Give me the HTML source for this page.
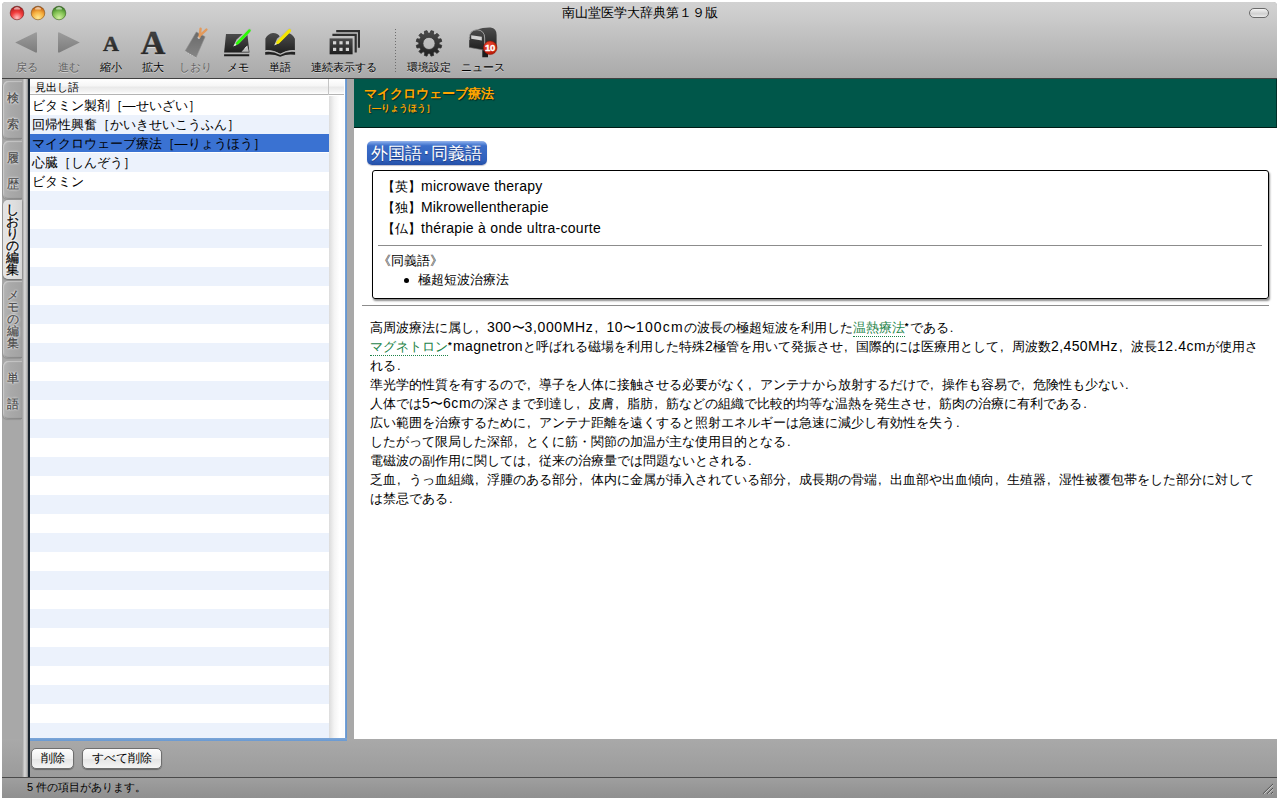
<!DOCTYPE html>
<html lang="ja">
<head>
<meta charset="utf-8">
<title>南山堂医学大辞典第１９版</title>
<style>
*{box-sizing:border-box;margin:0;padding:0}
html,body{width:1280px;height:800px;overflow:hidden;background:#fff}
body{font-family:"Liberation Sans",sans-serif;font-size:13px;color:#000;position:relative}
.abs{position:absolute}
#win{position:absolute;left:2px;top:2px;width:1275px;height:796px;background:#a8a8a8;overflow:hidden;border-radius:4px 4px 0 0}
/* title + toolbar */
#tb{position:absolute;left:0;top:0;width:1275px;height:76px;background:linear-gradient(#d2d2d2 0,#cdcdcd 12px,#bdbdbd 40px,#a9a9a9 76px)}
#tbline{position:absolute;left:0;top:76px;width:1275px;height:1px;background:#404040}
#title{position:absolute;left:0;top:3px;width:1275px;text-align:center;font-size:13px;line-height:16px;color:#000}
.light{position:absolute;top:4px;width:14px;height:14px;border-radius:50%}
#pill{position:absolute;left:1247px;top:6px;width:20px;height:10px;border-radius:5px;border:1px solid #6a6a6a;background:linear-gradient(#f4f4f4,#d0d0d0 60%,#ececec)}
.lbl{position:absolute;top:58px;font-size:11px;line-height:14px;white-space:nowrap;color:#000;text-align:center;text-shadow:0 1px 0 rgba(255,255,255,.45)}
.lbl.dis{color:#606060}
/* sidebar */
#side{position:absolute;left:0;top:77px;width:28px;height:698px;background:transparent;z-index:3}
.vtab{position:absolute;left:1px;width:19px;border-radius:5px 0 0 5px;background:linear-gradient(90deg,#b4b4b4,#a9a9a9 40%,#a2a2a2);box-shadow:inset 1px 1px 1px rgba(255,255,255,.35),inset 0 -1px 1px rgba(0,0,0,.18),-1px 1px 1px rgba(0,0,0,.12);font-size:12px;color:#484848;-webkit-text-stroke:.2px #484848;text-align:center;text-shadow:0 0 2px #ededed,0 0 2px #ededed,0 0 3px #ededed}
.vtab span{position:absolute;left:0;width:19px;line-height:13px;text-align:center}
.vtab.sel{background:linear-gradient(90deg,#e4e4e4,#dedede 60%,#d6d6d6);color:#000;font-size:13px;-webkit-text-stroke:.25px #000;text-shadow:0 0 2px #fff,0 0 2px #fff,0 0 3px #fff;box-shadow:0 1px 2px rgba(0,0,0,.4)}
#sidegrad{position:absolute;left:20px;top:0;width:6px;height:698px;background:linear-gradient(90deg,#9c9c9c,#d6d6d6 45%,#c4c4c4 70%,#8a8a8a)}
/* list */
#list{position:absolute;left:28px;top:77px;width:316px;height:659px;background:#fff;overflow:hidden}
#dline{position:absolute;left:26px;top:77px;width:2px;height:698px;background:#18222c;z-index:3}
#lhead{position:absolute;left:0;top:0;width:314px;height:16px;background:linear-gradient(#fff,#f6f6f6 45%,#e9e9e9 55%,#f4f4f4 85%,#fff);border-bottom:1px solid #b4b4b4;font-size:11px;line-height:16px;padding-left:5px}
.row{position:absolute;left:0;width:299px;height:19px;font-size:13px;line-height:19px;padding-left:1.5px;white-space:nowrap;overflow:hidden}
.alt{background:#ecf2fc}
.selrow{background:#3a72d2}
#sbar{position:absolute;left:299px;top:17px;width:15px;height:645px;background:linear-gradient(90deg,#dcdcdc,#f4f4f4 35%,#fff 70%,#fbfbfb)}
#focusr{position:absolute;left:342.5px;top:77px;width:2.5px;height:662px;z-index:2;background:linear-gradient(90deg,#7ba5d8,#5f92cf)}
#focusb{position:absolute;left:28px;top:736px;width:317px;height:3px;z-index:2;background:linear-gradient(#7ba5d8,#6a9ad2)}
/* content */
#content{position:absolute;left:352px;top:77px;width:923px;height:660px;background:#fff;overflow:hidden}
#ghead{position:absolute;left:0;top:0;width:923px;height:49px;background:#00574a;border-bottom:1px solid #001c16;border-right:1px solid #00302a}
#gt1{position:absolute;left:10px;top:7px;font-size:13px;line-height:16px;font-weight:bold;color:#ffa500;text-shadow:1px 1px 1px rgba(0,0,0,.55);white-space:nowrap}
#gt2{position:absolute;left:9px;top:24px;font-size:9px;line-height:10px;font-weight:bold;color:#ffa500;text-shadow:1px 1px 1px rgba(0,0,0,.5);white-space:nowrap}
#badge{position:absolute;left:13px;top:62px;width:120px;height:24px;border-radius:5px;background:linear-gradient(#9ab6ea 0,#6c96e0 8%,#3c6ec9 20%,#2f60bd 80%,#244fa6);color:#fff;font-size:17px;line-height:24px;white-space:nowrap;padding-left:4px;padding-top:1px;text-shadow:0 1px 1px rgba(0,0,40,.4);box-shadow:0 1px 1px rgba(0,0,60,.25)}
#box{position:absolute;left:18px;top:91px;width:897px;height:129px;border:1px solid #000;border-radius:3px;box-shadow:1px 2px 2px rgba(0,0,0,.45)}
.fl{position:absolute;left:9px;white-space:nowrap;font-size:13px;line-height:21px}
#hr1{position:absolute;left:5px;top:74px;width:884px;height:1px;background:#8c8c8c}
#hr2{position:absolute;left:8px;top:226px;width:907px;height:1px;background:#8c8c8c}
#body{position:absolute;left:16px;top:239px;font-size:13px;line-height:19px;white-space:nowrap;color:#000}
a.lk{color:#1e8449;text-decoration:none;display:inline-block;line-height:17px;border-bottom:1px dotted #1e8449;vertical-align:top;margin-top:1px}
.fc{display:inline-block;width:13px;text-align:left;padding-left:1px;font-size:13px}
.la{font-size:14px}
.ast{display:inline-block;width:5px;font-size:9.5px;font-weight:bold;vertical-align:3px;line-height:0;letter-spacing:0}
/* bottom */
#bbar{position:absolute;left:0;top:737px;width:1275px;height:38px;background:linear-gradient(#a9a9a9,#9b9b9b)}
#bline{position:absolute;left:0;top:775px;width:1275px;height:1px;background:#4a4a4a}
#status{position:absolute;left:0;top:776px;width:1275px;height:20px;background:linear-gradient(#9f9f9f,#8f8f8f);font-size:11px;line-height:19px;padding-left:25px;color:#000}
.btn{position:absolute;top:746px;height:21px;border-radius:5px;background:linear-gradient(#fdfdfd,#efefef 50%,#e4e4e4 51%,#f4f4f4);border:1px solid #6e6e6e;font-size:12px;line-height:19px;text-align:center;box-shadow:0 1px 1px rgba(0,0,0,.35)}
</style>
</head>
<body>
<div id="win">
  <div id="tb"></div>
  <div id="tbline"></div>
  <div id="title">南山堂医学大辞典第１９版</div>
  <div id="pill"></div>
  <svg class="abs" style="left:0;top:0" width="560" height="77" viewBox="2 2 560 77">
<defs>
<linearGradient id="gA" x1="0" y1="0" x2="0" y2="1"><stop offset="0" stop-color="#9c9c9c"/><stop offset="1" stop-color="#7c7c7c"/></linearGradient>
<linearGradient id="gD" x1="0" y1="0" x2="0" y2="1"><stop offset="0" stop-color="#4c4c4c"/><stop offset="1" stop-color="#1e1e1e"/></linearGradient>
<linearGradient id="gT" x1="0" y1="0" x2="0" y2="1"><stop offset="0" stop-color="#6a6a6a"/><stop offset="1" stop-color="#858585"/></linearGradient>
<radialGradient id="gR" cx=".4" cy=".3" r=".8"><stop offset="0" stop-color="#f04a30"/><stop offset="1" stop-color="#b01200"/></radialGradient>
<radialGradient id="rl" cx=".5" cy=".85" r=".85"><stop offset="0" stop-color="#ffc4c4"/><stop offset=".5" stop-color="#f23c3c"/><stop offset=".82" stop-color="#c22626"/><stop offset="1" stop-color="#7a1414"/></radialGradient>
<radialGradient id="yl" cx=".5" cy=".85" r=".85"><stop offset="0" stop-color="#ffe890"/><stop offset=".5" stop-color="#f6b040"/><stop offset=".82" stop-color="#d2741c"/><stop offset="1" stop-color="#8c3c0c"/></radialGradient>
<radialGradient id="gl" cx=".5" cy=".85" r=".85"><stop offset="0" stop-color="#d2f0a0"/><stop offset=".5" stop-color="#86c456"/><stop offset=".82" stop-color="#4c9030"/><stop offset="1" stop-color="#2a5a18"/></radialGradient>
<linearGradient id="hl" x1="0" y1="0" x2="0" y2="1"><stop offset="0" stop-color="#fff" stop-opacity=".9"/><stop offset="1" stop-color="#fff" stop-opacity="0"/></linearGradient>
</defs>
<!-- traffic lights -->
<g>
<circle cx="17" cy="13" r="6.8" fill="url(#rl)" stroke="#6e1414" stroke-opacity=".8" stroke-width=".7"/><ellipse cx="17" cy="8.9" rx="3" ry="1.7" fill="url(#hl)"/>
<circle cx="38" cy="13" r="6.8" fill="url(#yl)" stroke="#7e4a0c" stroke-opacity=".8" stroke-width=".7"/><ellipse cx="38" cy="8.9" rx="3" ry="1.7" fill="url(#hl)"/>
<circle cx="59" cy="13" r="6.8" fill="url(#gl)" stroke="#2e5a18" stroke-opacity=".8" stroke-width=".7"/><ellipse cx="59" cy="8.9" rx="3" ry="1.7" fill="url(#hl)"/>
</g>
<!-- back / forward -->
<path d="M15.2,42.4 L35.6,32.4 Q37,31.9 37,33.4 L37,51.6 Q37,53.1 35.6,52.6 Z" fill="url(#gA)"/>
<path d="M79.8,42.4 L59.4,32.4 Q58,31.9 58,33.4 L58,51.6 Q58,53.1 59.4,52.6 Z" fill="url(#gA)"/>
<!-- A small / large -->
<text x="111" y="51.6" font-family="Liberation Serif" font-weight="bold" font-size="22" text-anchor="middle" fill="#fff" fill-opacity=".45">A</text>
<text x="111" y="50.6" font-family="Liberation Serif" font-weight="bold" font-size="22" text-anchor="middle" fill="url(#gD)" stroke="#2a2a2a" stroke-width=".5">A</text>
<text x="153" y="55.2" font-family="Liberation Serif" font-weight="bold" font-size="34" text-anchor="middle" fill="#fff" fill-opacity=".45" stroke="#fff" stroke-opacity=".4" stroke-width=".5">A</text>
<text x="153" y="54.2" font-family="Liberation Serif" font-weight="bold" font-size="34" text-anchor="middle" fill="url(#gD)" stroke="#2a2a2a" stroke-width=".5">A</text>
<!-- bookmark tag -->
<g>
<path d="M196.3,32 L205.1,36.7 L196,57.6 L185.1,51.1 Z" fill="url(#gT)" stroke="#8e8e8e" stroke-width=".6" stroke-linejoin="round"/>
<path d="M185.4,51.6 L195.8,57.6" stroke="#c8c8c8" stroke-width="1" stroke-dasharray="1.6 1"/>
<circle cx="198.9" cy="37.6" r="1.3" fill="#d0d0d0"/>
<path d="M199.6,36.6 L200.6,28.6 M200.2,35.4 L206.4,29.6" stroke="#e39a5c" stroke-width="2.4" stroke-linecap="round" fill="none"/>
</g>
<!-- memo -->
<g>
<path d="M226,34 L247.4,34 L249.4,52.6 L224.1,52.6 Z" fill="url(#gD)"/>
<path d="M224.1,54.2 L249.2,54.2 L249.2,56.2 L224.1,56.2 Z" fill="#1c1c1c"/>
<path d="M241.5,51.8 L247.4,45.6 L248.9,51.8 Z" fill="#bdbdbd"/>
<path d="M244.6,48.6 L247.2,46.4" stroke="#eee" stroke-width="1"/>
<path d="M233.2,46.6 L236.6,39.4 L248.6,28.4 Q250.4,27.6 251.2,29.2 Q251.8,30.6 250.6,31.8 L239.2,43.2 Z" fill="#bcbcbc"/>
<path d="M236.4,42.2 L248.6,29.6 Q249.8,28.8 250.6,29.8 Q251.2,30.8 250.2,31.8 L238.4,44.2 L234.6,45.6 Z" fill="#2bfa06"/>
<path d="M233.6,46.2 L235.2,43.6 L236.6,45 Z" fill="#e8e8e8"/>
</g>
<!-- book -->
<g>
<path d="M265.4,38.6 Q268,33.6 273,33 Q278,33 280.2,37.2 Q282.4,33 287.6,33.1 Q292.4,33.8 294.9,38.8 L294.9,50.8 Q287.6,49.8 280.2,54.1 Q272.8,49.8 265.4,50.8 Z" fill="url(#gD)"/>
<path d="M265.4,50 Q273,49.2 280.2,53.8 Q287.4,49.2 294.9,50 L294.9,53 Q287.4,52 280.2,55.6 Q273,52 265.4,53 Z" fill="#b4b4b4"/><path d="M265.2,51.9 Q273,50.8 280.2,55 Q287.4,50.8 295.1,51.9 L295.1,54.8 Q287.4,53.4 280.2,56.8 Q273,53.4 265.2,54.8 Z" fill="#222"/>
<path d="M274.2,45.4 L277,38.8 L288.6,28.6 Q290.2,27.8 291,29.2 Q291.6,30.4 290.6,31.6 L279.4,42.6 Z" fill="#b8b8b8"/>
<path d="M276.6,41.4 L288.4,29.4 Q289.8,28.4 290.9,29.7 Q291.6,31 290.5,32 L278.8,43.7 L275.4,44.6 Z" fill="#f4e600"/>
<path d="M274.4,45.2 L275.8,42.8 L277,44 Z" fill="#e0e0e0"/>
</g>
<!-- stacked windows -->
<g fill="#2e2e2e">
<path d="M336.2,30 H360 V47.8 H357.9 V32.2 H336.2 Z"/>
<path d="M332.4,33.8 H356.8 V52.5 H354.6 V36 H332.4 Z"/>
<rect x="329.6" y="38.4" width="23" height="15.9" fill="url(#gD)"/>
<g fill="#d4d4d4"><rect x="333" y="41.2" width="3.2" height="3.2"/><rect x="339.4" y="41.2" width="3.2" height="3.2"/><rect x="345.8" y="41.2" width="3.2" height="3.2"/><rect x="333" y="47.8" width="3.2" height="3.2"/><rect x="339.4" y="47.8" width="3.2" height="3.2"/><rect x="345.8" y="47.8" width="3.2" height="3.2"/></g>
</g>
<!-- separator -->
<path d="M395.5,29 V72" stroke="#6e6e6e" stroke-width="1" stroke-dasharray="1 2"/>
<!-- gear -->
<path d="M429.98,33.25 L430.97,30.65 L433.66,31.37 L433.23,34.12 L434.92,35.10 L437.08,33.35 L439.05,35.32 L437.30,37.48 L438.28,39.17 L441.03,38.74 L441.75,41.43 L439.15,42.42 L439.15,44.38 L441.75,45.37 L441.03,48.06 L438.28,47.63 L437.30,49.32 L439.05,51.48 L437.08,53.45 L434.92,51.70 L433.23,52.68 L433.66,55.43 L430.97,56.15 L429.98,53.55 L428.02,53.55 L427.03,56.15 L424.34,55.43 L424.77,52.68 L423.08,51.70 L420.92,53.45 L418.95,51.48 L420.70,49.32 L419.72,47.63 L416.97,48.06 L416.25,45.37 L418.85,44.38 L418.85,42.42 L416.25,41.43 L416.97,38.74 L419.72,39.17 L420.70,37.48 L418.95,35.32 L420.92,33.35 L423.08,35.10 L424.77,34.12 L424.34,31.37 L427.03,30.65 L428.02,33.25Z M435.10,43.40 A6.1,6.1 0 1,0 422.90,43.40 A6.1,6.1 0 1,0 435.10,43.40Z" fill="url(#gD)" fill-rule="evenodd" stroke="#333" stroke-width=".8" stroke-linejoin="round"/>
<!-- mailbox -->
<g>
<path d="M482.3,48 H488 V57.2 H482.3 Z" fill="#1c1c1c"/>
<path d="M477,29.4 Q483,27.4 490.6,27.6 Q496.6,28.4 496.6,35 L496.6,47 L484.8,50.4 L484.8,38 Q484.6,30.4 477,29.4 Z" fill="url(#gD)"/>
<path d="M469.2,47.4 L469.2,37.6 Q469.6,30.2 477,29.6 Q484.6,30.2 484.8,38 L484.8,50.2 Z" fill="url(#gD)"/><path d="M469.3,40 L469.3,37.6 Q469.7,30.3 477,29.7 Q484.5,30.3 484.7,38 L484.7,50" fill="none" stroke="#a4a4a4" stroke-width=".9"/><path d="M469.2,47.4 L484.8,50.2" stroke="#777" stroke-width=".6"/>
<path d="M471.2,35.2 L481.8,36.8 L481.8,40.4 L471.2,38.8 Z" fill="#d2d2d2"/>
<circle cx="490.2" cy="47.8" r="6.8" fill="url(#gR)" stroke="#8a1000" stroke-width=".5"/>
<text x="490" y="51.2" font-family="Liberation Sans" font-weight="bold" font-size="9.5" text-anchor="middle" fill="#fff" stroke="#fff" stroke-width=".35" letter-spacing="-.4">10</text>
</g>
</svg>
  <div class="lbl dis" style="left:8.5px;width:32px">戻る</div><div class="lbl dis" style="left:51.0px;width:32px">進む</div><div class="lbl " style="left:93.0px;width:32px">縮小</div><div class="lbl " style="left:135.0px;width:32px">拡大</div><div class="lbl dis" style="left:172.0px;width:43px">しおり</div><div class="lbl " style="left:220.0px;width:32px">メモ</div><div class="lbl " style="left:262.0px;width:32px">単語</div><div class="lbl " style="left:303.7px;width:76px">連続表示する</div><div class="lbl " style="left:399.7px;width:54px">環境設定</div><div class="lbl " style="left:454.2px;width:54px">ニュース</div>
  <div id="side"><div id="sidegrad"></div>
    <div class="vtab" style="top:2px;height:58px"><span style="top:10.5px">検</span><span style="top:36.5px">索</span></div>
    <div class="vtab" style="top:62px;height:58px"><span style="top:10.5px">履</span><span style="top:36.5px">歴</span></div>
    <div class="vtab sel" style="top:121px;height:79px"><span style="top:3px">し</span><span style="top:15px">お</span><span style="top:27px">り</span><span style="top:39px">の</span><span style="top:51px">編</span><span style="top:63px">集</span></div>
    <div class="vtab" style="top:202px;height:77px"><span style="top:8px">メ</span><span style="top:20px">モ</span><span style="top:32px">の</span><span style="top:44px">編</span><span style="top:56px">集</span></div>
    <div class="vtab" style="top:282px;height:58px"><span style="top:10.5px">単</span><span style="top:36.5px">語</span></div>
  </div>
  <div id="dline"></div>
  <div id="list"><div id="lhead">見出し語</div><div id="sbar"></div><div class="abs" style="left:298px;top:0;width:1px;height:16px;background:#c4c4c4"></div>
    <div class="row" style="top:17px;height:19px">ビタミン製剤［―せいざい］</div>
    <div class="row alt" style="top:36px;height:19px">回帰性興奮［かいきせいこうふん］</div>
    <div class="row selrow" style="top:55px;height:18px">マイクロウェーブ療法［―りょうほう］</div>
    <div class="row alt" style="top:74px;height:19px">心臓［しんぞう］</div>
    <div class="row" style="top:93px;height:19px">ビタミン</div>
    <div class="row alt" style="top:112px;height:19px"></div>
    <div class="row alt" style="top:150px;height:19px"></div>
    <div class="row alt" style="top:188px;height:19px"></div>
    <div class="row alt" style="top:226px;height:19px"></div>
    <div class="row alt" style="top:264px;height:19px"></div>
    <div class="row alt" style="top:302px;height:19px"></div>
    <div class="row alt" style="top:340px;height:19px"></div>
    <div class="row alt" style="top:378px;height:19px"></div>
    <div class="row alt" style="top:416px;height:19px"></div>
    <div class="row alt" style="top:454px;height:19px"></div>
    <div class="row alt" style="top:492px;height:19px"></div>
    <div class="row alt" style="top:530px;height:19px"></div>
    <div class="row alt" style="top:568px;height:19px"></div>
    <div class="row alt" style="top:606px;height:19px"></div>
    <div class="row alt" style="top:644px;height:18px"></div>
  </div>
  <div id="focusr"></div><div id="focusb"></div>
  <div id="content">
    <div id="ghead"><div id="gt1">マイクロウェーブ療法</div><div id="gt2">［―りょうほう］</div></div>
    <div id="badge">外国語･同義語</div>
    <div id="box">
      <div class="fl" style="top:4.5px">【英】<span class="la" style="letter-spacing:0.24px">microwave therapy</span></div>
      <div class="fl" style="top:25.5px">【独】<span class="la" style="letter-spacing:0.17px">Mikrowellentherapie</span></div>
      <div class="fl" style="top:46.5px">【仏】<span class="la" style="letter-spacing:0.29px">thérapie à onde ultra-courte</span></div>
      <div id="hr1"></div>
      <div class="fl" style="left:5px;top:78.5px">《同義語》</div>
      <div class="fl" style="left:45px;top:98px">極超短波治療法</div>
      <div class="abs" style="left:31px;top:107px;width:5px;height:5px;border-radius:50%;background:#000"></div>
    </div>
    <div id="hr2"></div>
    <div id="body">高周波療法に属し<span class="fc">,</span><span class="la" style="letter-spacing:0.38px">300</span>〜<span class="la" style="letter-spacing:0.65px">3,000MHz</span><span class="fc">,</span><span class="la" style="letter-spacing:0.46px">10</span>〜<span class="la" style="letter-spacing:1.13px">100cm</span>の波長の極超短波を利用した<a class="lk">温熱療法</a><span class="ast">*</span>である<span class="fc">.</span><br>
<a class="lk">マグネトロン</a><span class="ast">*</span><span class="la" style="letter-spacing:0.34px">magnetron</span>と呼ばれる磁場を利用した特殊<span class="la" style="letter-spacing:0.20px">2</span>極管を用いて発振させ<span class="fc">,</span>国際的には医療用として<span class="fc">,</span>周波数<span class="la" style="letter-spacing:0.40px">2,450MHz</span><span class="fc">,</span>波長<span class="la" style="letter-spacing:0.56px">12.4cm</span>が使用さ<br>
れる<span class="fc">.</span><br>
準光学的性質を有するので<span class="fc">,</span>導子を人体に接触させる必要がなく<span class="fc">,</span>アンテナから放射するだけで<span class="fc">,</span>操作も容易で<span class="fc">,</span>危険性も少ない<span class="fc">.</span><br>
人体では<span class="la" style="letter-spacing:0.20px">5</span>〜<span class="la" style="letter-spacing:0.58px">6cm</span>の深さまで到達し<span class="fc">,</span>皮膚<span class="fc">,</span>脂肪<span class="fc">,</span>筋などの組織で比較的均等な温熱を発生させ<span class="fc">,</span>筋肉の治療に有利である<span class="fc">.</span><br>
広い範囲を治療するために<span class="fc">,</span>アンテナ距離を遠くすると照射エネルギーは急速に減少し有効性を失う<span class="fc">.</span><br>
したがって限局した深部<span class="fc">,</span>とくに筋・関節の加温が主な使用目的となる<span class="fc">.</span><br>
電磁波の副作用に関しては<span class="fc">,</span>従来の治療量では問題ないとされる<span class="fc">.</span><br>
乏血<span class="fc">,</span>うっ血組織<span class="fc">,</span>浮腫のある部分<span class="fc">,</span>体内に金属が挿入されている部分<span class="fc">,</span>成長期の骨端<span class="fc">,</span>出血部や出血傾向<span class="fc">,</span>生殖器<span class="fc">,</span>湿性被覆包帯をした部分に対して<br>
は禁忌である<span class="fc">.</span></div>
  </div>
  <div id="bbar"></div><div id="bline"></div>
  <div id="status">5 件の項目があります。</div>
  <svg class="abs" style="left:1260px;top:781px;z-index:4" width="12" height="12" viewBox="1262 783 12 12">
<g stroke="#505050" stroke-width="1"><path d="M1262.9,793.8 L1273,783.9"/><path d="M1267,793.8 L1273,788"/><path d="M1271.1,793.8 L1273,792"/></g>
<g stroke="#d0d0d0" stroke-width="1"><path d="M1264.2,793.8 L1273.2,785.1"/><path d="M1268.3,793.8 L1273.2,789.2"/><path d="M1272.3,793.8 L1273.2,793.1"/></g>
</svg>
  <div class="btn" style="left:29px;width:43px">削除</div><div class="btn" style="left:80px;width:80px">すべて削除</div>
</div>
</body>
</html>
